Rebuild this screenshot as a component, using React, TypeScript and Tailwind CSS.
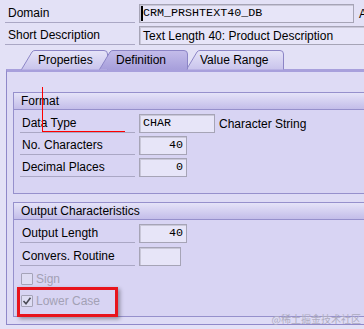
import React from "react";

function Tab({ width, label, active, pl, id }: { width: number; label: string; active?: boolean; pl: number; id: string }) {
  const w = width;
  const d = `M0.5,19.5 L11,2 Q12,0.5 14,0.5 L${w - 4},0.5 Q${w - 0.5},0.5 ${w - 0.5},4 L${w - 0.5},19.5`;
  return (
    <div className={`relative h-[19px] shrink-0 ${active ? "z-10" : ""}`} style={{ width: w }}>
      <svg className="absolute inset-0" width={w} height={20} viewBox={`0 0 ${w} 20`}>
        <defs>
          <linearGradient id={id} x1="0" y1="0" x2="0" y2="1">
            {active ? (
              <>
                <stop offset="0" stopColor="#c4bdea" />
                <stop offset="1" stopColor="#a79fdb" />
              </>
            ) : (
              <>
                <stop offset="0" stopColor="#e6e4f8" />
                <stop offset="1" stopColor="#c9c4ec" />
              </>
            )}
          </linearGradient>
        </defs>
        <path d={d} fill={`url(#${id})`} stroke="#8c85c6" strokeWidth="1" />
      </svg>
      <div className="relative h-full flex items-center pt-[1px]" style={{ paddingLeft: pl }}>
        {label}
      </div>
    </div>
  );
}

function Input({ w, children, right, mono }: { w: number; children?: React.ReactNode; right?: boolean; mono?: boolean }) {
  return (
    <div
      className={`h-[19px] shrink-0 border border-[#a6a4b6] bg-[#e7e5f8] shadow-[inset_1px_1px_0_#c9c7d8] flex items-center ${right ? "justify-end pr-[3px]" : "pl-[3px]"} ${mono ? "font-['Liberation_Mono',monospace] text-[11.7px]" : ""}`}
      style={{ width: w }}
    >
      {children}
    </div>
  );
}

function Row({ label, children }: { label: string; children?: React.ReactNode }) {
  return (
    <div className="flex h-[19px] items-stretch">
      <div className="ml-[6px] w-[115px] shrink-0 border-b border-[#aaa7c4] pl-[2px] flex items-center">{label}</div>
      <div className="ml-[4px] flex items-center gap-[4px]">{children}</div>
    </div>
  );
}

function Group({ title, children, pb }: { title: string; children: React.ReactNode; pb: string }) {
  return (
    <div className={`border-l border-t border-b border-[#9690cc] bg-[#d8d4f3] ${pb}`}>
      <div className="h-[17px] border-b border-[#9690cc] bg-gradient-to-b from-[#e5e3f8] to-[#c3bde9] pl-[7px] flex items-center">
        {title}
      </div>
      {children}
    </div>
  );
}

function Check({ checked, label }: { checked?: boolean; label: string }) {
  return (
    <div className="flex h-[17px] items-center">
      <div className="ml-[7px] w-[12px] h-[12px] border border-[#a5a3b8] bg-[#dedcf3] rounded-[1px] flex items-center justify-center">
        {checked && (
          <svg width="10" height="10" viewBox="0 0 10 10">
            <path d="M1.5,5 L4,7.8 L8.5,1.8" fill="none" stroke="#4a4a55" strokeWidth="1.6" />
          </svg>
        )}
      </div>
      <span className="ml-[3px] text-[#a3a1b5]">{label}</span>
    </div>
  );
}

export default function App() {
  return (
    <div className="relative w-[364px] h-[329px] overflow-hidden bg-[#e3e1f6] font-['Liberation_Sans',Arial,sans-serif] text-[12px] text-black leading-none">
      <div className="pt-[4px] pl-[5px] flex flex-col gap-[3px]">
        <div className="flex h-[19px]">
          <div className="w-[130px] shrink-0 border-b border-[#aaa7c4] pl-[3px] flex items-center">Domain</div>
          <div className="ml-[4px] relative">
            <Input w={215} mono>
              CRM_PRSHTEXT40_DB
            </Input>
            <span className="absolute left-[2px] top-[2px] w-[2px] h-[15px] bg-black" />
          </div>
          <div className="ml-[5px] flex items-center">A</div>
        </div>
        <div className="flex h-[19px]">
          <div className="w-[130px] shrink-0 border-b border-[#aaa7c4] pl-[3px] flex items-center">Short Description</div>
          <div className="ml-[4px]">
            <Input w={240}>Text Length 40: Product Description</Input>
          </div>
        </div>
      </div>

      <div className="mt-[5px] flex h-[19px]">
        <div className="ml-[21px] flex">
          <Tab width={87} label="Properties" pl={17} id="t1" />
          <div className="ml-[-9px] relative z-10">
            <Tab width={89} label="Definition" pl={17} id="t2" active />
          </div>
          <div className="ml-[-2px]">
            <Tab width={98} label="Value Range" pl={14} id="t3" />
          </div>
        </div>
      </div>

      <div className="ml-[6px] border-l border-b border-[#8f88c9] border-t-[3px] border-t-[#a8a0dc] bg-[#dedbf5] pt-[20px] pl-[6px] pb-[7px]">
        <Group title="Format" pb="pb-[16px]">
          <div className="pt-[4px] flex flex-col gap-[3px]">
            <Row label="Data Type">
              <Input w={76} mono>
                CHAR
              </Input>
              <span>Character String</span>
            </Row>
            <Row label="No. Characters">
              <Input w={48} mono right>
                40
              </Input>
            </Row>
            <Row label="Decimal Places">
              <Input w={48} mono right>
                0
              </Input>
            </Row>
          </div>
        </Group>
        <div className="mt-[8px]">
          <Group title="Output Characteristics" pb="pb-[7px]">
            <div className="pt-[4px] flex flex-col gap-[4px]">
              <Row label="Output Length">
                <Input w={48} mono right>
                  40
                </Input>
              </Row>
              <Row label="Convers. Routine">
                <Input w={42} />
              </Row>
            </div>
            <div className="mt-[4px] flex flex-col gap-[5px]">
              <Check label="Sign" />
              <Check label="Lower Case" checked />
            </div>
          </Group>
        </div>
      </div>

      <div className="absolute left-[42px] top-[87px] w-[1px] h-[45px] bg-[#ff0000]" />
      <div className="absolute left-[42px] top-[131px] w-[83px] h-[1px] bg-[#ff0000]" />
      <div className="absolute left-[17px] top-[287px] w-[101px] h-[30px] border-[3px] border-[#e8141c] shadow-[2px_2px_4px_rgba(0,0,0,0.35)]" />
      <div className="absolute right-[3px] top-[314px] text-[10px] text-[#aeacc0] font-['Noto_Sans_CJK_SC',sans-serif]">
        @稀土掘金技术社区
      </div>
    </div>
  );
}
